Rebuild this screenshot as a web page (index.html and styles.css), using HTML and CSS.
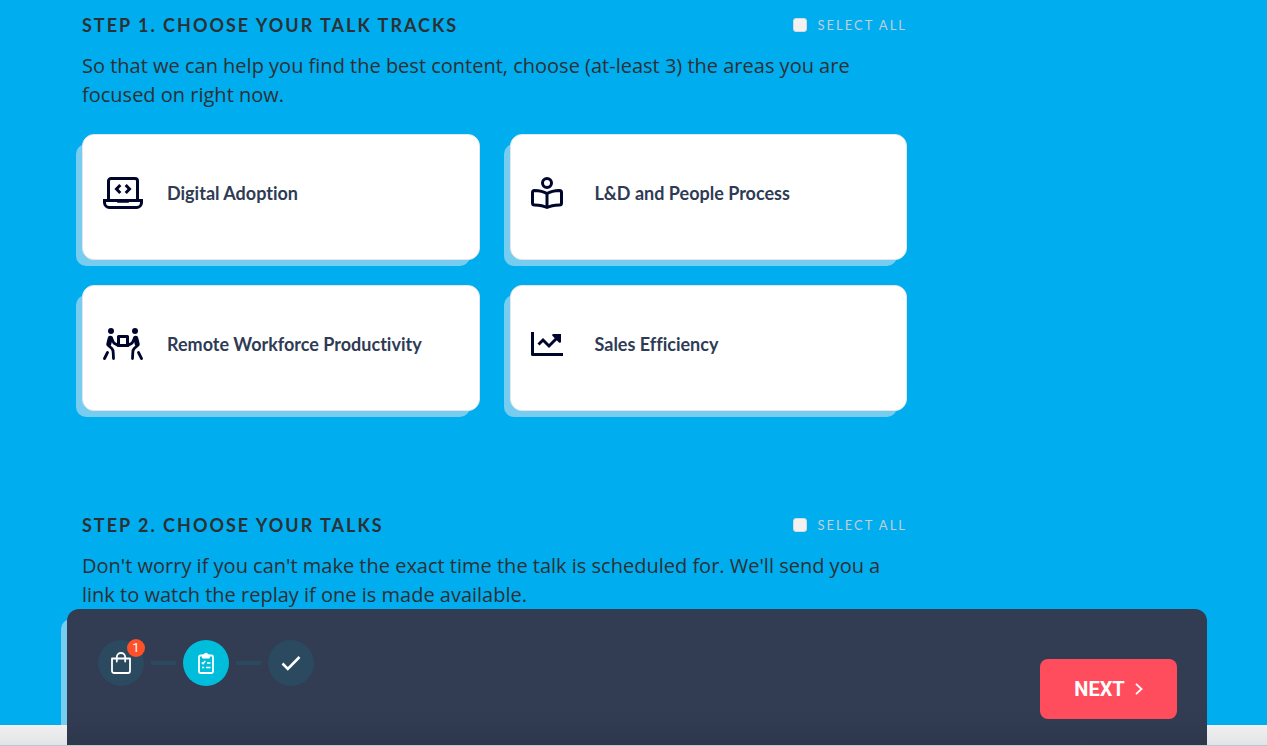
FILE: index.html
```html
<!DOCTYPE html>
<html lang="en">
<head>
    <meta charset="UTF-8">
    <meta name="viewport" content="width=device-width, initial-scale=1.0">
    <title>Choose your talks</title>
    <link rel="stylesheet" href="styles.css">
</head>
<body>
    <main class="page">
        <div class="column">
            <!-- Step 1 -->
            <section class="step">
                <div class="step-head">
                    <h2>Step 1. Choose your talk tracks</h2>
                    <label class="select-all" for="all_tracks">
                        <input type="checkbox" id="all_tracks" name="all_tracks">
                        Select all
                    </label>
                </div>
                <p>So that we can help you find the best content, choose (at-least 3) the areas you are focused on right now.</p>

                <div class="tracks">
                    <button type="button" class="track">
                        <span class="track-icon">
                            <svg width="40" height="32" viewBox="0 0 40 32" fill="none" stroke="currentColor" stroke-width="3">
                                <path d="M5.5 22V4a2.500 2.500 0 0 1 2.500-2.500h24a2.500 2.500 0 0 1 2.500 2.500v18"/>
                                <path d="M1.500 23.500h37v2a5 5 0 0 1-5 5h-27a5 5 0 0 1-5-5z"/>
                                <path d="M15 24.500h10" stroke-width="2.500" stroke-linecap="round"/>
                                <path d="M17.300 8l-3.800 4 3.800 4M22.700 8l3.800 4-3.800 4"/>
                            </svg>
                        </span>
                        Digital Adoption
                    </button>
                    <button type="button" class="track">
                        <span class="track-icon">
                            <svg width="32" height="32" viewBox="0 0 32 32" fill="none" stroke="currentColor" stroke-width="3" stroke-linejoin="round">
                                <circle cx="16" cy="6" r="4.500"/>
                                <path d="M16 16.500c-3.500-2-7.500-2.800-12.500-3a2 2 0 0 0-2 2v10.500a2 2 0 0 0 2 2c5 .2 9 .7 12.500 2.500 3.500-1.800 7.500-2.300 12.500-2.500a2 2 0 0 0 2-2V15.500a2 2 0 0 0-2-2c-5 .2-9 1-12.500 3z"/>
                                <path d="M16 16.500v14"/>
                            </svg>
                        </span>
                        L&amp;D and People Process
                    </button>
                    <button type="button" class="track">
                        <span class="track-icon">
                            <svg width="40" height="32" viewBox="0 0 40 32" fill="none" stroke="currentColor" stroke-width="3" stroke-linecap="round" stroke-linejoin="round">
                                <g fill="currentColor" stroke="none">
                                    <circle cx="8" cy="3" r="3"/>
                                    <circle cx="32" cy="3" r="3"/>
                                </g>
                                <path d="M7.200 10.300L5.800 16" stroke-width="5"/>
                                <path d="M32.800 10.300L34.200 16" stroke-width="5"/>
                                <path d="M5.500 17.500l3.300 3c1 1 1.300 2 1.400 4l.3 6M4.500 24.500l-.5 1-2.500 5M8.500 10l2.300 5 4 2.200" stroke-width="2.800"/>
                                <path d="M34.500 17.500l-3.300 3c-1 1-1.300 2-1.400 4l-.3 6M35.500 24.500l.5 1 2.500 5M31.500 10l-2.300 5-4 2.200" stroke-width="2.800"/>
                                <path d="M15.500 8.500h9v9h-9z"/>
                            </svg>
                        </span>
                        Remote Workforce Productivity
                    </button>
                    <button type="button" class="track">
                        <span class="track-icon">
                            <svg width="32" height="32" viewBox="0 0 32 32" fill="none" stroke="currentColor" stroke-width="3" stroke-linejoin="round">
                                <path d="M1.500 4v22.500H32"/>
                                <path d="M7.500 16.500l4.500-4.500 6 6 8.500-8.500" stroke-linejoin="miter"/>
                                <path d="M22.500 6H30v7.500c0 1.400-1.300 1.700-2.100.9l-6.300-6.300c-.8-.8-.5-2.100.9-2.100z" fill="currentColor" stroke="none"/>
                            </svg>
                        </span>
                        Sales Efficiency
                    </button>
                </div>
            </section>

            <!-- Step 2 -->
            <section class="step">
                <div class="step-head">
                    <h2>Step 2. Choose your talks</h2>
                    <label class="select-all" for="all_talks">
                        <input type="checkbox" id="all_talks" name="all_talks">
                        Select all
                    </label>
                </div>
                <p>Don't worry if you can't make the exact time the talk is scheduled for. We'll send you a link to watch the replay if one is made available.</p>
            </section>
        </div>
    </main>
    <footer class="site-footer"></footer>

    <!-- Sticky progress bar -->
    <div class="progress">
        <div class="progress-steps">
            <div class="dot">
                <svg width="20" height="22" viewBox="0 0 20 22" fill="none" stroke="currentColor" stroke-width="1.800" stroke-linejoin="round" stroke-linecap="round">
                    <path d="M1 6.500h18V19a2 2 0 0 1-2 2H3a2 2 0 0 1-2-2z"/>
                    <path d="M5.800 9.500V5.200a4.200 4.200 0 0 1 8.400 0v4.300"/>
                </svg>
                <span class="badge">1</span>
            </div>
            <div class="line"></div>
            <div class="dot dot-active">
                <svg width="16" height="22" viewBox="0 0 16 22" fill="none" stroke="currentColor" stroke-width="1.800" stroke-linejoin="round">
                    <rect x="1" y="3.500" width="14" height="17.500" rx="1.500"/>
                    <path d="M4.500 3h1.700a1.800 1.800 0 0 1 3.600 0h1.700v3h-7z" fill="currentColor" stroke-width="1"/>
                    <path d="M3.800 10.500l1.200 1.200 2.200-2.700M9 11h3.500M4 15.500h2.200M8 15.500h4.500" stroke-width="1.500"/>
                </svg>
            </div>
            <div class="line"></div>
            <div class="dot">
                <svg width="20" height="16" viewBox="0 0 20 16" fill="none" stroke="currentColor" stroke-width="2.600">
                    <path d="M1.500 8.500l5.300 5.300L18.500 2"/>
                </svg>
            </div>
        </div>
        <button type="button" class="next">
            NEXT
            <svg width="8" height="12" viewBox="0 0 8 12" fill="none" stroke="currentColor" stroke-width="1.800">
                <path d="M1 .8L6.500 6 1 11.200"/>
            </svg>
        </button>
    </div>
</body>
</html>
```

FILE: styles.css
```css
* {
    box-sizing: border-box;
}
body {
    margin: 0;
    min-height: 100vh;
    display: flex;
    flex-direction: column;
    font-family: "Open Sans", sans-serif;
    color: #2d3135;
    background-color: #e9ebee;
}
.page {
    flex: 1;
    padding: 0 60px 0 67px;
    background-color: #00adef;
}
.column {
    width: 75%;
    padding: 11px 15px 0;
}
.step {
    margin-bottom: 100px;
}
.step:last-child {
    margin-bottom: 0;
}
.step-head {
    display: flex;
    justify-content: space-between;
    align-items: center;
    height: 28px;
}
h2 {
    margin: 0;
    font-family: Lato, sans-serif;
    font-size: 18px;
    font-weight: 700;
    letter-spacing: 2px;
    text-transform: uppercase;
}
.select-all {
    display: flex;
    align-items: center;
    gap: 10px;
    font-family: Lato, sans-serif;
    font-size: 13px;
    letter-spacing: 2px;
    text-transform: uppercase;
    color: #c3ced6;
}
.select-all input {
    appearance: none;
    width: 14px;
    height: 14px;
    margin: 0;
    border: 1px solid #d3dade;
    border-radius: 3px;
    background-color: #f2f2f2;
}
.step p {
    margin: 12px 0 25px;
    font-size: 20px;
    line-height: 29px;
}
.step:last-child p {
    margin-bottom: 0;
}

/* Talk track cards */
.tracks {
    display: grid;
    grid-template-columns: 1fr 1fr;
    gap: 25px 30px;
}
.track {
    position: relative;
    display: flex;
    align-items: flex-start;
    height: 126px;
    padding: 42px 20px 0;
    border: 1px solid #e3e6ea;
    border-radius: 12px;
    background-color: #ffffff;
    color: #2f3b55;
    font-family: Lato, sans-serif;
    font-size: 18px;
    font-weight: 700;
    font-variant-ligatures: none;
    line-height: 32px;
    text-align: left;
    cursor: pointer;
}
.track::before,
.progress::before {
    content: "";
    position: absolute;
    z-index: -1;
    background-color: #77cdf0;
}
.page,
.tracks {
    position: relative;
    z-index: 0;
}
.track::before {
    top: 9px;
    right: 9px;
    bottom: -7px;
    left: -7px;
    border-radius: 10px;
}
.track-icon {
    display: flex;
    flex: none;
    width: 64px;
    color: #00062b;
}

.site-footer {
    height: 21px;
    border-bottom: 2px solid #bcc5d2;
    border-bottom-width: 1px;
    background: linear-gradient(#f0f0f0, #e2e4e7);
}

/* Sticky progress bar */
.progress {
    position: fixed;
    z-index: 1;
    right: 60px;
    bottom: 1px;
    left: 67px;
    height: 136px;
    padding: 31px 30px 0 31px;
    display: flex;
    justify-content: space-between;
    align-items: flex-start;
}
.progress::before {
    top: 10px;
    right: 10px;
    bottom: 20px;
    left: -6px;
    border-radius: 10px 0 0 0;
}
.progress::after {
    content: "";
    position: absolute;
    z-index: -1;
    inset: 0;
    border-radius: 12px 12px 0 0;
    background: linear-gradient(#323c53 70%, #2e384d);
}
.progress-steps {
    display: flex;
    align-items: center;
    gap: 7px;
}
.dot {
    position: relative;
    display: flex;
    justify-content: center;
    align-items: center;
    width: 46px;
    height: 46px;
    border-radius: 50%;
    background-color: #2b495f;
    color: #ffffff;
}
.dot-active {
    background-color: #00bddb;
}
.line {
    width: 25px;
    height: 4px;
    background-color: #2b495f;
}
.badge {
    position: absolute;
    top: -1px;
    right: -1px;
    width: 18px;
    height: 18px;
    border-radius: 50%;
    background-color: #ff5029;
    font-family: Roboto, sans-serif;
    font-size: 13px;
    line-height: 18px;
    text-align: center;
}
.next {
    display: flex;
    justify-content: center;
    align-items: center;
    gap: 10px;
    width: 137px;
    height: 60px;
    margin-top: 19px;
    border: none;
    border-radius: 8px;
    background-color: #ff4d5e;
    color: #ffffff;
    font-family: Roboto, sans-serif;
    font-size: 20px;
    font-weight: 700;
    cursor: pointer;
}
```
